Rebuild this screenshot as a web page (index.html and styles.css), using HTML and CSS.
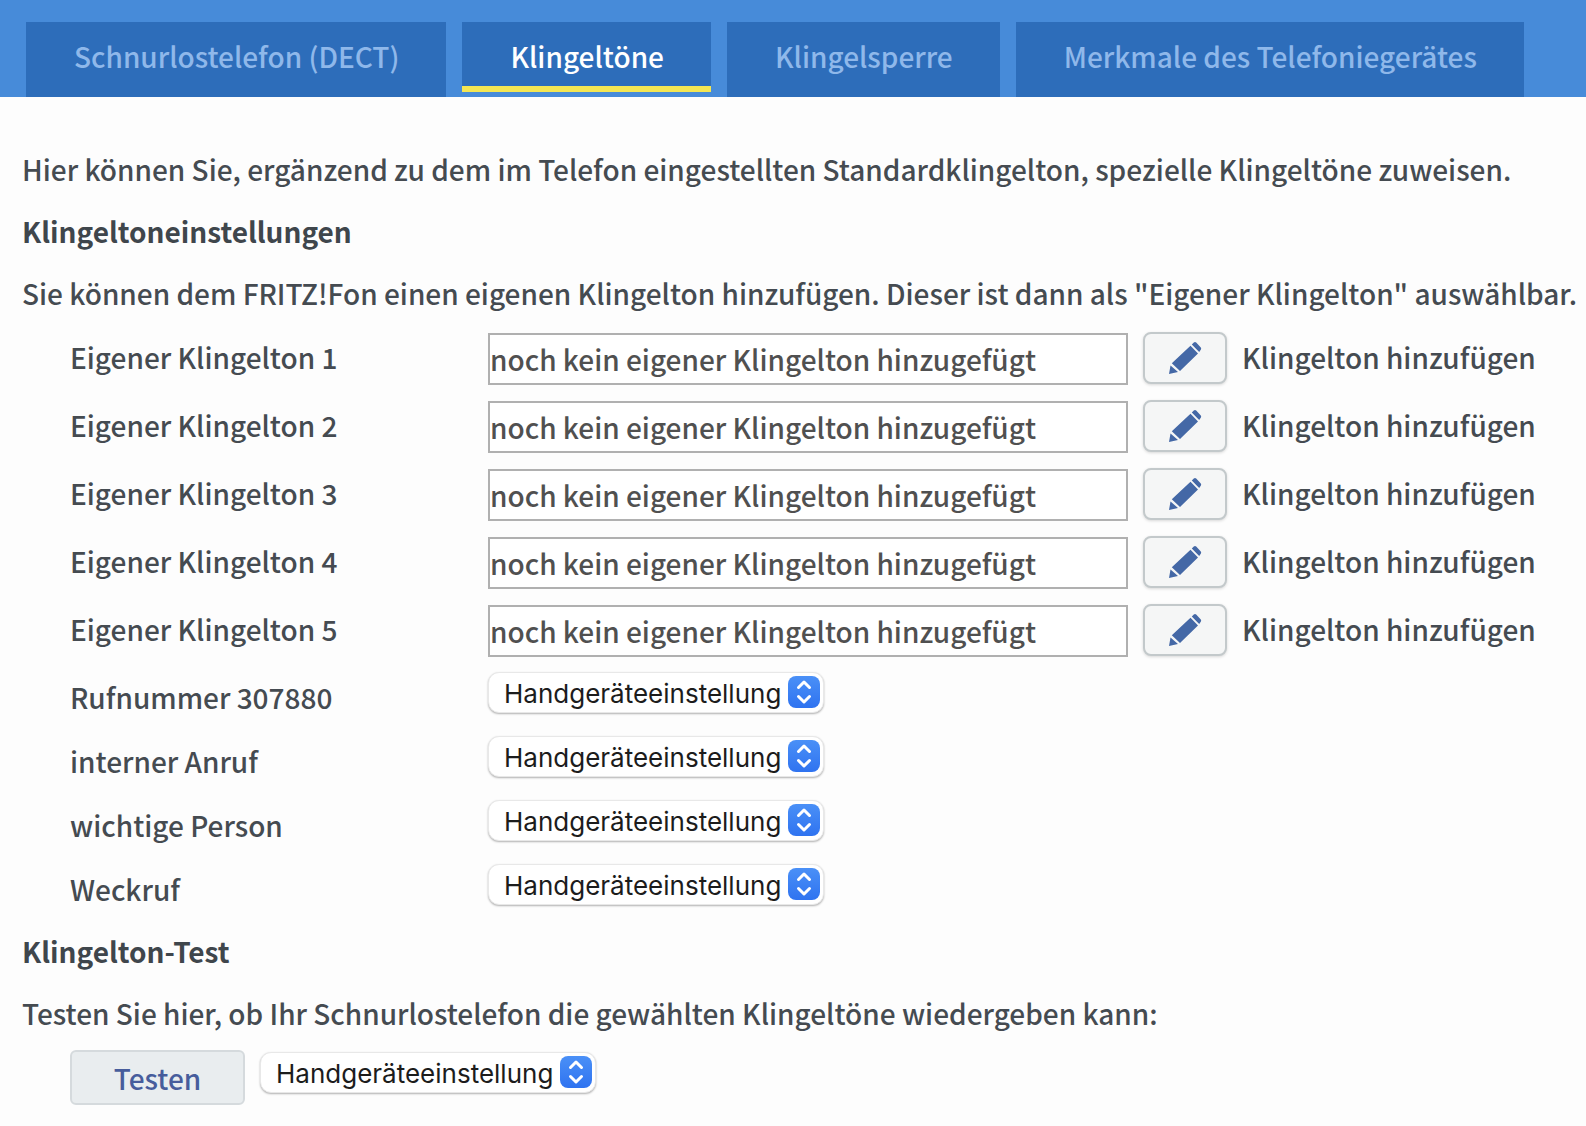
FILE: index.html
```html
<!DOCTYPE html>
<html lang="de">
<head>
    <meta charset="UTF-8">
    <meta name="viewport" content="width=device-width, initial-scale=1.0">
    <title>Klingeltöne</title>
    <link rel="stylesheet" href="styles.css">
</head>
<body>
    <svg class="symbols" width="0" height="0" aria-hidden="true">
        <symbol id="pencil" viewBox="0 0 34 34">
            <path d="M1 33 L2.500 24.500 L10 31 Z M3.800 22.300 L22.500 4.800 L30 12.500 L12 30 Z M23.800 3.500 L25.800 1.500 Q27 0.500 28.200 1.500 L32.800 6.500 Q33.600 7.500 32.800 8.700 L31.200 11 Z"/>
        </symbol>
        <symbol id="updown" viewBox="0 0 32 32">
            <path d="M10.500 11.500 L16 6 L21.500 11.500 M10.500 20.500 L16 26 L21.500 20.500"/>
        </symbol>
    </svg>
    <nav class="tabs">
        <a href="#dect">Schnurlostelefon (DECT)</a>
        <a href="#klingeltoene" class="active">Klingeltöne</a>
        <a href="#klingelsperre">Klingelsperre</a>
        <a href="#merkmale">Merkmale des Telefoniegerätes</a>
    </nav>
    <main>
        <p>Hier können Sie, ergänzend zu dem im Telefon eingestellten Standardklingelton, spezielle Klingeltöne zuweisen.</p>
        <h2>Klingeltoneinstellungen</h2>
        <p>Sie können dem FRITZ!Fon einen eigenen Klingelton hinzufügen. Dieser ist dann als "Eigener Klingelton" auswählbar.</p>
        <form>
            <div class="rows">
                <div class="row">
                    <label for="ton1">Eigener Klingelton 1</label>
                    <input type="text" id="ton1" value="noch kein eigener Klingelton hinzugefügt" readonly>
                    <button type="button" class="edit" id="edit1" aria-label="Klingelton 1 bearbeiten"><svg><use href="#pencil"/></svg></button>
                    <label for="edit1">Klingelton hinzufügen</label>
                </div>
                <div class="row">
                    <label for="ton2">Eigener Klingelton 2</label>
                    <input type="text" id="ton2" value="noch kein eigener Klingelton hinzugefügt" readonly>
                    <button type="button" class="edit" id="edit2" aria-label="Klingelton 2 bearbeiten"><svg><use href="#pencil"/></svg></button>
                    <label for="edit2">Klingelton hinzufügen</label>
                </div>
                <div class="row">
                    <label for="ton3">Eigener Klingelton 3</label>
                    <input type="text" id="ton3" value="noch kein eigener Klingelton hinzugefügt" readonly>
                    <button type="button" class="edit" id="edit3" aria-label="Klingelton 3 bearbeiten"><svg><use href="#pencil"/></svg></button>
                    <label for="edit3">Klingelton hinzufügen</label>
                </div>
                <div class="row">
                    <label for="ton4">Eigener Klingelton 4</label>
                    <input type="text" id="ton4" value="noch kein eigener Klingelton hinzugefügt" readonly>
                    <button type="button" class="edit" id="edit4" aria-label="Klingelton 4 bearbeiten"><svg><use href="#pencil"/></svg></button>
                    <label for="edit4">Klingelton hinzufügen</label>
                </div>
                <div class="row">
                    <label for="ton5">Eigener Klingelton 5</label>
                    <input type="text" id="ton5" value="noch kein eigener Klingelton hinzugefügt" readonly>
                    <button type="button" class="edit" id="edit5" aria-label="Klingelton 5 bearbeiten"><svg><use href="#pencil"/></svg></button>
                    <label for="edit5">Klingelton hinzufügen</label>
                </div>
                <div class="row choice">
                    <label for="rufnummer">Rufnummer 307880</label>
                    <div class="select">
                        <select id="rufnummer"><option>Handgeräteeinstellung</option></select>
                        <svg><use href="#updown"/></svg>
                    </div>
                </div>
                <div class="row choice">
                    <label for="intern">interner Anruf</label>
                    <div class="select">
                        <select id="intern"><option>Handgeräteeinstellung</option></select>
                        <svg><use href="#updown"/></svg>
                    </div>
                </div>
                <div class="row choice">
                    <label for="wichtig">wichtige Person</label>
                    <div class="select">
                        <select id="wichtig"><option>Handgeräteeinstellung</option></select>
                        <svg><use href="#updown"/></svg>
                    </div>
                </div>
                <div class="row choice">
                    <label for="weckruf">Weckruf</label>
                    <div class="select">
                        <select id="weckruf"><option>Handgeräteeinstellung</option></select>
                        <svg><use href="#updown"/></svg>
                    </div>
                </div>
            </div>
            <h2>Klingelton-Test</h2>
            <p>Testen Sie hier, ob Ihr Schnurlostelefon die gewählten Klingeltöne wiedergeben kann:</p>
            <div class="test">
                <button type="button" class="run">Testen</button>
                <div class="select">
                    <select aria-label="Klingelton zum Testen"><option>Handgeräteeinstellung</option></select>
                    <svg><use href="#updown"/></svg>
                </div>
            </div>
        </form>
    </main>
</body>
</html>
```
FILE: styles.css
```css
* {
    box-sizing: border-box;
}
body {
    margin: 0;
    background-color: #fdfdfd;
    color: #454b51;
    font-family: "Noto Sans CJK SC", "Noto Sans", sans-serif;
    font-size: 28px;
    font-weight: 500;
    line-height: 40px;
}
.symbols {
    display: block;
}
.tabs {
    display: flex;
    gap: 16px;
    padding: 22px 26px 0;
    background-color: #478bd9;
}
.tabs a {
    padding: 14px 47px 21px 48px;
    background-color: #2d6dba;
    color: #8fb8ea;
    text-decoration: none;
    white-space: nowrap;
}
.tabs .active {
    margin-bottom: 5px;
    padding-bottom: 10px;
    border-bottom: 6px solid #f4e653;
    color: #fff;
}
main {
    padding: 52px 8px 20px 22px;
}
p, h2 {
    margin: 0 0 22px;
    font-size: 28px;
}
h2 {
    color: #3f464c;
    font-weight: bold;
}
.rows {
    margin: -10px 0 10px 48px;
}
.row {
    display: grid;
    grid-template-columns: 403px minmax(0, 640px) 84px auto;
    column-gap: 15px;
    align-items: center;
    justify-content: start;
    height: 68px;
    white-space: nowrap;
}
.row label {
    padding-bottom: 4px;
}
.choice {
    height: 64px;
}
.choice label {
    padding-bottom: 0;
}
input {
    height: 52px;
    padding: 0;
    border: 2px solid #b0b0b0;
    background-color: #fff;
    color: #505050;
    font: inherit;
}
.edit {
    display: flex;
    align-items: center;
    justify-content: center;
    height: 52px;
    margin-bottom: 2px;
    padding: 0;
    border: 2px solid #c3c9cb;
    border-radius: 8px;
    background-color: #f5f6f6;
    box-shadow: 0 1px 3px rgba(0, 0, 0, 0.15);
}
.edit svg {
    width: 34px;
    height: 34px;
    fill: #4468a6;
}
.select {
    position: relative;
    width: 336px;
}
.choice .select {
    margin-bottom: 10px;
}
select {
    display: block;
    width: 100%;
    height: 41px;
    padding: 2px 36px 0 15px;
    appearance: none;
    border: 1px solid #e8e8e8;
    border-radius: 11px;
    background-color: #fff;
    box-shadow: 0 1px 2px rgba(0, 0, 0, 0.3);
    color: #1c1c1c;
    font-family: Inter, sans-serif;
    font-size: 26px;
}
.select svg {
    position: absolute;
    top: 4px;
    right: 4px;
    width: 32px;
    height: 32px;
    border-radius: 8px;
    background: linear-gradient(#4a90f7, #2f73f0);
    fill: none;
    stroke: #fff;
    stroke-width: 3;
    stroke-linecap: round;
    stroke-linejoin: round;
    pointer-events: none;
}
.test {
    display: flex;
    align-items: flex-start;
    gap: 15px;
    margin: -5px 0 0 48px;
}
.test .select {
    margin-top: 2px;
}
.run {
    width: 175px;
    height: 55px;
    padding: 0;
    border: 2px solid #d5dadd;
    border-radius: 6px;
    background-color: #e9edef;
    color: #475d9c;
    font: inherit;
}
```
